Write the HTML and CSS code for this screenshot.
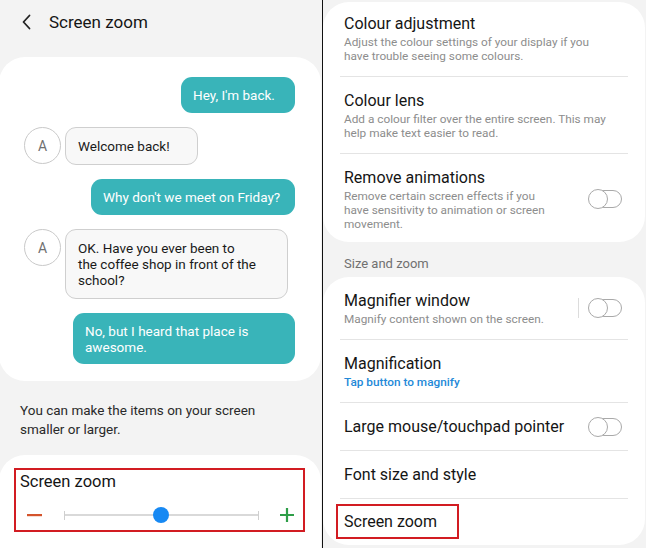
FILE: index.html
```html
<!DOCTYPE html>
<html>
<head>
<meta charset="utf-8">
<link rel="stylesheet" href="styles.css">
</head>
<body>
<div class="screen">
  <section class="panel panel-left">
    <header class="appbar">
      <svg class="back" width="12" height="16" viewBox="0 0 12 16"><path d="M8.5 1.5 L2.5 8 L8.5 14.5" fill="none" stroke="#222" stroke-width="1.8" stroke-linecap="round" stroke-linejoin="round"/></svg>
      <h1 class="appbar-title">Screen zoom</h1>
    </header>

    <div class="card preview">
      <div class="msg msg-out"><div class="bubble bubble-out w1">Hey, I'm back.</div></div>
      <div class="msg msg-in"><div class="avatar">A</div><div class="bubble bubble-in w2">Welcome back!</div></div>
      <div class="msg msg-out"><div class="bubble bubble-out w3">Why don't we meet on Friday?</div></div>
      <div class="msg msg-in"><div class="avatar">A</div><div class="bubble bubble-in w4">OK. Have you ever been to<br>the coffee shop in front of the<br>school?</div></div>
      <div class="msg msg-out"><div class="bubble bubble-out w5">No, but I heard that place is<br>awesome.</div></div>
    </div>

    <p class="hint">You can make the items on your screen<br>smaller or larger.</p>

    <div class="card zoom-card">
      <div class="zoom-box">
        <div class="zoom-label">Screen zoom</div>
        <div class="slider">
          <svg class="minus" width="16" height="4" viewBox="0 0 16 4"><rect x="0" y="1" width="15" height="2.2" fill="#d4542c"/></svg>
          <div class="track">
            <span class="tick"></span>
            <span class="line"></span>
            <span class="tick"></span>
            <span class="knob"></span>
          </div>
          <svg class="plus" width="16" height="16" viewBox="0 0 16 16"><path d="M8 1 V15 M1 8 H15" stroke="#2e9e48" stroke-width="2.2"/></svg>
        </div>
      </div>
    </div>
  </section>

  <div class="split"></div>

  <section class="panel panel-right">
    <div class="card settings">
      <div class="row">
        <div class="row-text">
          <div class="row-title">Colour adjustment</div>
          <div class="row-desc">Adjust the colour settings of your display if you<br>have trouble seeing some colours.</div>
        </div>
      </div>
      <div class="row">
        <div class="row-text">
          <div class="row-title">Colour lens</div>
          <div class="row-desc">Add a colour filter over the entire screen. This may<br>help make text easier to read.</div>
        </div>
      </div>
      <div class="row">
        <div class="row-text">
          <div class="row-title">Remove animations</div>
          <div class="row-desc">Remove certain screen effects if you<br>have sensitivity to animation or screen<br>movement.</div>
        </div>
        <span class="toggle"><span class="toggle-knob"></span></span>
      </div>
    </div>

    <div class="section-label">Size and zoom</div>

    <div class="card settings">
      <div class="row">
        <div class="row-text">
          <div class="row-title">Magnifier window</div>
          <div class="row-desc">Magnify content shown on the screen.</div>
        </div>
        <span class="vsep"></span>
        <span class="toggle"><span class="toggle-knob"></span></span>
      </div>
      <div class="row">
        <div class="row-text">
          <div class="row-title">Magnification</div>
          <div class="row-desc row-link">Tap button to magnify</div>
        </div>
      </div>
      <div class="row row-single">
        <div class="row-text">
          <div class="row-title">Large mouse/touchpad pointer</div>
        </div>
        <span class="toggle"><span class="toggle-knob"></span></span>
      </div>
      <div class="row row-single">
        <div class="row-text">
          <div class="row-title">Font size and style</div>
        </div>
      </div>
      <div class="row row-single row-marked">
        <div class="row-text">
          <div class="row-title marked">Screen zoom</div>
        </div>
      </div>
    </div>
  </section>
</div>
</body>
</html>
```

FILE: styles.css
```css
* { box-sizing: border-box; }
html, body { margin: 0; padding: 0; }
body {
  width: 646px;
  height: 548px;
  overflow: hidden;
  background: #f3f3f3;
  font-family: Roboto, "Noto Sans", sans-serif;
  color: #151515;
}
.screen {
  display: flex;
  width: 646px;
  height: 548px;
  overflow: hidden;
}
.panel {
  display: flex;
  flex-direction: column;
  background: #f3f3f3;
  overflow: hidden;
}
.panel-left { width: 322px; }
.split { width: 1px; background: #111; flex: none; }
.panel-right { width: 323px; }

.card {
  background: #fff;
  border-radius: 26px;
}

/* ---------- left ---------- */
.appbar {
  display: flex;
  align-items: center;
  height: 43px;
  padding-left: 21px;
  flex: none;
}
.back { flex: none; }
.appbar-title {
  margin: 0 0 0 16px;
  font-size: 17px;
  font-weight: 400;
  color: #151515;
}
.preview {
  margin: 14px 1px 0 -1px;
  padding: 20px 26px 17px 25px;
  display: flex;
  flex-direction: column;
  gap: 14px;
  flex: none;
}
.msg { display: flex; align-items: flex-start; }
.msg-out { justify-content: flex-end; }
.msg-in { gap: 4px; }
.avatar {
  width: 37px;
  height: 37px;
  border-radius: 50%;
  border: 1px solid #c9c9c9;
  display: flex;
  align-items: center;
  justify-content: center;
  font-size: 14px;
  color: #707070;
  flex: none;
}
.bubble {
  font-size: 13.5px;
  line-height: 16px;
  padding: 10px 12px;
  border-radius: 11px;
  white-space: nowrap;
}
.bubble-out {
  background: #39b4b9;
  color: #fff;
}
.bubble-in {
  background: #f8f8f8;
  border: 1px solid #cfcfcf;
  color: #1a1a1a;
}
.w1 { width: 114px; }
.w2 { width: 133px; }
.w3 { width: 204px; }
.w4 { width: 223px; }
.w5 { width: 222px; padding-top: 10px; padding-bottom: 9px; }

.hint {
  margin: 20px 0 0 20px;
  font-size: 13.5px;
  line-height: 19px;
  color: #2a2a2a;
  flex: none;
}
.zoom-card {
  margin: 16px 1px 0 -1px;
  padding: 13px 16px 40px 15px;
  flex: none;
}
.zoom-box {
  border: 2px solid #d21c22;
  padding: 2px 0 6px 4px;
}
.zoom-label {
  font-size: 16.5px;
  line-height: 20px;
  color: #151515;
}
.slider {
  display: flex;
  align-items: center;
  height: 18px;
  margin-top: 14px;
  padding-left: 7px;
}
.minus { flex: none; }
.track {
  position: relative;
  display: flex;
  align-items: center;
  width: 195px;
  margin-left: 21px;
  height: 18px;
}
.tick {
  width: 1px;
  height: 9px;
  background: #cfcfcf;
  flex: none;
}
.line {
  flex: 1;
  height: 2px;
  background: #d9d9d9;
}
.knob {
  position: absolute;
  left: 89px;
  top: 1px;
  width: 16px;
  height: 16px;
  border-radius: 50%;
  background: #1789f3;
}
.plus { flex: none; margin-left: 20px; }

/* ---------- right ---------- */
.settings {
  margin: 2px 1px 0 0;
  padding: 0 17px;
  flex: none;
}
.row {
  display: flex;
  align-items: center;
  padding: 13px 0 13px 4px;
  border-bottom: 1px solid #e4e4e4;
}
.row:first-child { padding-top: 11px; }
.row:last-child { border-bottom: none; padding-bottom: 11px; }
.row-text { flex: 1; min-width: 0; }
.row-title {
  font-size: 16px;
  line-height: 22px;
  color: #151515;
}
.row-desc {
  font-size: 11.8px;
  line-height: 14px;
  color: #8d8d8d;
}
.row-link {
  color: #2389d8;
  font-weight: 500;
}
.settings + .section-label + .settings .row:first-child { padding-top: 13px; }
.row-single { padding-top: 13px; padding-bottom: 12px; }
.row.row-marked { padding-top: 5px; padding-bottom: 6px; padding-left: 0; }
.marked {
  display: inline-block;
  border: 2px solid #d21c22;
  padding: 4.5px 6px;
  width: 123px;
  margin-left: -4px;
}
.vsep {
  width: 1px;
  height: 20px;
  background: #dcdcdc;
  margin-right: 16px;
  flex: none;
}
.toggle {
  position: relative;
  width: 27px;
  height: 18px;
  border: 1.5px solid #a9a9a9;
  border-radius: 9px;
  margin-right: 6px;
  flex: none;
}
.toggle-knob {
  position: absolute;
  left: -8px;
  top: -2.5px;
  width: 20px;
  height: 20px;
  border-radius: 50%;
  border: 1.5px solid #a9a9a9;
  background: #fff;
}
.section-label {
  margin: 14px 0 0 21px;
  font-size: 13px;
  line-height: 16px;
  color: #707070;
  flex: none;
}
.section-label + .card { margin-top: 5px; }
```
